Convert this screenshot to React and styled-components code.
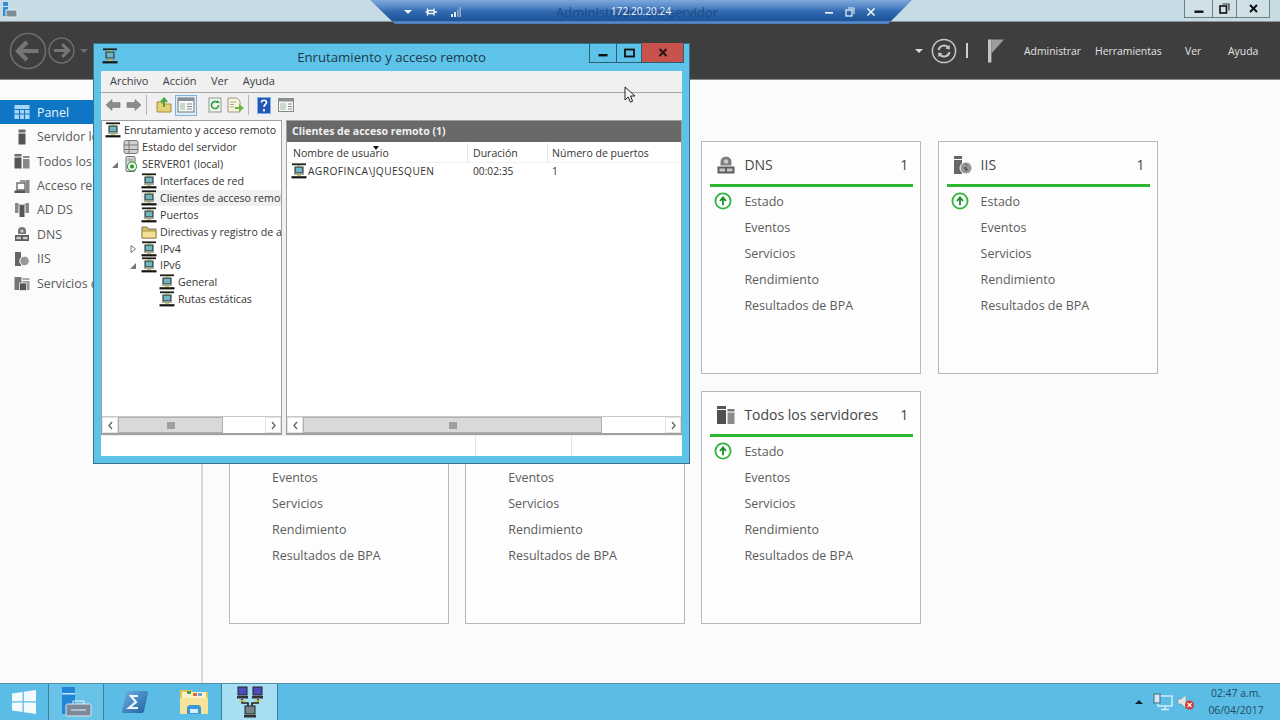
import React from "react";
import styled, { createGlobalStyle } from "styled-components";

const Global = createGlobalStyle`
  html, body { margin: 0; padding: 0; width: 1280px; height: 720px; overflow: hidden; background: #fbfbfc; }
  * { box-sizing: border-box; }
  #root { width: 1280px; height: 720px; }
`;
const FONT = `"Open Sans", "Noto Sans", "Liberation Sans", sans-serif`;

const Page = styled.div`
  position: relative; width: 1280px; height: 720px; display: flex; flex-direction: column;
  overflow: hidden; font-family: ${FONT}; color: #4a4a4a; background: #fbfbfc;
`;
const TitleBar = styled.div`
  height: 22px; flex: none; background: #c6dbe3; display: flex; align-items: flex-start;
  justify-content: space-between; padding: 2px 10px 0 2px; border-bottom: 1px solid #8b9598;
`;
const CaptionButtons = styled.div`
  display: flex; height: 18px; margin-top: -2px; border: 1px solid #6c7f88; border-top: 0; background: #cfe0e7;
`;
const CaptionButton = styled.div`
  width: ${p => p.$w}px; display: flex; align-items: center; justify-content: center;
  & + & { border-left: 1px solid #6c7f88; }
`;
const Header = styled.div`
  height: 58px; flex: none; background: #3e3e3e; display: flex; align-items: center;
  padding: 0 21px 0 9px; border-bottom: 1px solid #8a8a8a;
`;
const NavGroup = styled.div` display: flex; align-items: center; gap: 1px; `;
const HeaderRight = styled.div` margin-left: auto; display: flex; align-items: center; `;
const DropTriangle = styled.span`
  display: block; width: 0; height: 0; border-left: 4px solid transparent; border-right: 4px solid transparent;
  border-top: 4px solid ${p => p.$c || "#d8d8d8"}; margin: ${p => p.$m || "0"};
  ${p => p.$up ? "transform: rotate(180deg);" : ""}
`;
const VSep = styled.span` display: block; width: 2px; height: 15px; background: #cfcfcf; margin: 0 19px 0 9px; `;
const MenuLabel = styled.span`
  font-size: 10.4px; color: #e4e4e4; width: ${p => p.$w}px; white-space: nowrap;
`;
const Body = styled.div` flex: 1; display: flex; min-height: 0; `;
const Sidebar = styled.div`
  width: 203px; flex: none; border-right: 2px solid #d9d9d9; padding-top: 20px; background: #fbfbfc;
`;
const SideItem = styled.div`
  height: 24.45px; display: flex; align-items: center; gap: 7px; padding-left: 14px; font-size: 12.4px; white-space: nowrap;
  color: ${p => p.$active ? "#e9f4fc" : "#5a5a5a"}; background: ${p => p.$active ? "#0f76c5" : "transparent"};
`;
const SideIcon = styled.span` width: 16px; height: 16px; display: flex; flex: none; `;
const Content = styled.div`
  flex: 1; display: grid; grid-template-columns: repeat(4, 220px); grid-auto-rows: 233px; column-gap: 16.2px; row-gap: 17px;
  padding: 61px 0 0 26px; align-content: start;
`;
const Card = styled.div`
  border: 1px solid #b9b9b9; background: #fdfdfd; padding: 0 7px 0 8px;
`;
const CardHead = styled.div`
  height: 45px; border-bottom: 3px solid #2eb52e; display: flex; align-items: center; padding: 3px 5px 0 6px; gap: 8px;
  font-size: 14px; color: #454545; white-space: nowrap;
`;
const CardIcon = styled.span` width: 20px; height: 20px; flex: none; display: flex; `;
const CardCount = styled.span` margin-left: auto; `;
const CardList = styled.div` padding-top: 1.3px; `;
const CardRow = styled.div`
  height: 26.15px; display: flex; align-items: center; padding-left: 34px; position: relative; font-size: 12.5px; color: #5c5c5c; white-space: nowrap;
`;
const StatusBadge = styled.span` position: absolute; left: 4px; top: 4px; display: flex; `;
const Taskbar = styled.div`
  height: 37px; flex: none; background: #5bbde5; display: flex; align-items: stretch; border-top: 1px solid #4d91ad;
`;
const TaskButton = styled.div`
  width: ${p => p.$w}px; flex: none; display: flex; align-items: center; justify-content: center;
  background: ${p => p.$active ? "#a8def3" : p.$soft ? "#69c3e8" : "transparent"};
  border-right: ${p => p.$line ? "1px solid #3f7f9b" : "0"};
`;
const Tray = styled.div` margin-left: auto; display: flex; align-items: center; padding-right: 16px; `;
const TrayIcon = styled.span` display: flex; margin-right: ${p => p.$m}px; `;
const Clock = styled.div`
  font-size: 10.4px; line-height: 17px; text-align: center; color: #1f4a60; width: 56px; margin-top: -1px;
`;

const Window = styled.div`
  position: absolute; left: 93px; top: 43px; width: 597px; height: 421px; background: #5ec3e9;
  box-shadow: inset 0 0 0 1px rgba(40,80,100,.7); display: flex; flex-direction: column; padding: 0 8px 8px;
`;
const WinTitle = styled.div`
  height: 28px; flex: none; display: flex; align-items: center; position: relative; justify-content: center;
  font-size: 13.2px; color: #1d3a48; padding-bottom: 1px;
`;
const WinIcon = styled.span` position: absolute; left: 1px; top: 5px; display: flex; `;
const WinButtons = styled.div`
  position: absolute; right: -2px; top: 0; height: 20px; display: flex; border: 1px solid #2f5f74; border-top: 0;
`;
const WinButton = styled.div`
  width: ${p => p.$w}px; display: flex; align-items: center; justify-content: center;
  background: ${p => p.$close ? "#c8534d" : "transparent"};
  & + & { border-left: 1px solid #2f5f74; }
`;
const WinMenu = styled.div`
  height: 22px; flex: none; background: #f0f0f1; display: flex; align-items: center; gap: 14.5px; padding: 0 0 2px 9px;
  font-size: 11px; color: #3c3c3c; border-bottom: 1px solid #a6a6a6;
`;
const WinToolbar = styled.div`
  height: 27px; flex: none; background: #f0f0f1; display: flex; align-items: center; padding: 0 0 3px 0;
`;
const ToolIcon = styled.span`
  width: ${p => p.$w}px; height: 21px; flex: none; display: flex; align-items: center; justify-content: center;
  ${p => p.$on ? "background:#dcecf9;outline:1px solid #7db2de;outline-offset:-1px;" : ""}
`;
const ToolSep = styled.span` width: 1px; height: 20px; background: #b5b5b5; margin: 0 6px 0 2px; flex: none; `;
const Panes = styled.div`
  flex: 1; min-height: 0; display: flex; gap: 4px; background: #f0f0f0;
`;
const Pane = styled.div`
  width: ${p => p.$w}; flex: ${p => p.$grow ? 1 : "none"}; min-width: 0; display: flex; flex-direction: column;
  background: #fff; border: 1px solid #a0a0a0; border-bottom: 2px solid #a0a0a0;
`;
const PaneScroll = styled.div` flex: 1; min-height: 0; overflow: hidden; position: relative; `;
const TreeBody = styled(PaneScroll)` padding-top: 1px; `;
const TreeRow = styled.div`
  height: 16.88px; display: flex; align-items: center; font-size: 10.65px; color: #333; white-space: nowrap;
  padding-left: ${p => p.$level * 18 + 3}px; position: relative;
`;
const TreeArrow = styled.svg` position: absolute; left: ${p => p.$level * 18 - 9}px; top: 5px; `;
const TreeLabel = styled.span`
  display: flex; align-items: center; gap: 3px; height: 16.9px; flex: 1; min-width: 0;
  ${p => p.$sel ? "background:#f0f0f0;" : ""}
`;
const ListHead = styled.div`
  height: 21px; flex: none; background: #696969; color: #f0f0f0; font-weight: 700; font-size: 10.55px;
  display: flex; align-items: center; padding: 0 0 1px 5px;
`;
const ColRow = styled.div`
  height: 20px; margin-top: 1px; display: flex; align-items: center; font-size: 10.55px; color: #333; position: relative;
  border-bottom: 1px solid #f2f2f2;
`;
const Col = styled.span`
  width: ${p => p.$w}px; padding-left: ${p => p.$p}px; height: 100%; display: flex; align-items: center; white-space: nowrap; flex: none;
  border-right: 1px solid #e6e6e6;
`;
const Cell = styled.span`
  width: ${p => p.$w}px; padding-left: ${p => p.$p}px; display: flex; align-items: center; gap: 1px; white-space: nowrap; flex: none;
`;
const UserName = styled.span` letter-spacing: .42px; `;
const DataRow = styled.div` height: 16px; display: flex; align-items: center; font-size: 10.2px; color: #333; `;
const SortMark = styled.span`
  position: absolute; left: 86px; top: 3px; width: 0; height: 0; border-left: 3.5px solid transparent; border-right: 3.5px solid transparent; border-top: 4px solid #111;
`;
const HScroll = styled.div` height: 17px; flex: none; display: flex; background: #fff; border-top: 1px solid #c9c9c9; `;
const ScrollBtn = styled.span`
  width: 16px; flex: none; display: flex; align-items: center; justify-content: center; border: 1px solid #e2e2e2;
`;
const ScrollThumb = styled.span`
  width: ${p => p.$w}px; flex: none; background: #d9d9d9; border: 1px solid #b0b0b0; display: flex; align-items: center; justify-content: center;
`;
const ScrollRest = styled.span` flex: 1; `;
const WinStatus = styled.div`
  height: 21px; flex: none; background: #fff; display: flex; border-top: 1px solid #f0f0f0;
`;
const StatusCell = styled.span` width: ${p => p.$w}px; flex: none; border-right: 1px solid #e4e4e4; `;
const RdpBar = styled.div`
  position: absolute; left: 370px; top: 0; width: 542px; height: 24px;
  clip-path: polygon(0 0, 100% 0, 95.6% 100%, 4.6% 100%);
  background: linear-gradient(180deg, #7ea8da 0%, #5b8ccb 25%, #2e68ae 50%, #1d5499 85%, #5f8dc9 92%, #4678b8 100%);
  display: flex; align-items: center; justify-content: center; padding-bottom: 2px;
`;
const RdpLeft = styled.div` position: absolute; left: 34px; top: 4px; height: 15px; display: flex; align-items: center; gap: 13px; `;
const RdpRight = styled.div` position: absolute; right: 36px; top: 4px; height: 15px; display: flex; align-items: center; gap: 11px; `;
const RdpBack = styled.span` position: absolute; left: 186px; top: 3px; font-size: 13px; color: #1d4a84; white-space: nowrap; `;
const RdpAddr = styled.span` position: relative; font-size: 10.2px; color: #eef4fb; `;
const Cursor = styled.svg` position: absolute; left: 624px; top: 86px; `;

const Rras = ({ s = 16 }) => (
  <svg width={s} height={s} viewBox="0 0 16 16" style={{ flex: "none" }}>
    <rect x="1" y="0.4" width="14" height="1.8" fill="#1e1e1e" />
    <rect x="6" y="2.2" width="4" height="1.3" fill="#a8bf4f" />
    <rect x="3.4" y="3.5" width="9.2" height="7" fill="#3f4a4a" />
    <rect x="4.8" y="4.7" width="6.4" height="4.6" fill="#6eb7c4" />
    <rect x="3" y="10.5" width="10" height="1.3" fill="#8f8f8f" />
    <rect x="6" y="11.8" width="4" height="1.4" fill="#c2c94d" />
    <rect x="0.5" y="13.2" width="15" height="2.2" fill="#141414" />
  </svg>
);
const Chev = ({ d = "l" }) => (
  <svg width="7" height="9" viewBox="0 0 7 9"><path d={d === "l" ? "M5 1 2 4.5 5 8" : "M2 1 5 4.5 2 8"} fill="none" stroke="#666" strokeWidth="1.4" /></svg>
);
const Grip = () => (
  <svg width="8" height="7" viewBox="0 0 8 7"><path d="M1 0v7M3 0v7M5 0v7M7 0v7" stroke="#666" strokeWidth="1" /></svg>
);
const ScrollBar = ({ thumb }) => (
  <HScroll>
    <ScrollBtn><Chev /></ScrollBtn>
    <ScrollThumb $w={thumb}><Grip /></ScrollThumb>
    <ScrollRest />
    <ScrollBtn><Chev d="r" /></ScrollBtn>
  </HScroll>
);
const StateUp = () => (
  <svg width="18" height="18" viewBox="0 0 18 18">
    <circle cx="9" cy="9" r="7.6" fill="#fff" stroke="#2fb53a" strokeWidth="1.8" />
    <path d="M9 13.2V6.6M6 9 9 5.4 12 9" fill="none" stroke="#159027" strokeWidth="1.8" />
  </svg>
);
const DnsIcon = () => (
  <svg width="20" height="20" viewBox="0 0 20 20">
    <path d="M4.5 10.5V7a5.5 5.5 0 0 1 11 0v3.5z" fill="#7d7d7d" /><circle cx="10" cy="6.5" r="2.3" fill="#c9c9c9" />
    <rect x="1.5" y="11.5" width="17" height="7" fill="#5d5d5d" /><rect x="3.5" y="13.5" width="5.5" height="3" fill="#c9c9c9" /><rect x="11" y="13.5" width="5.5" height="3" fill="#c9c9c9" />
  </svg>
);
const IisIcon = () => (
  <svg width="20" height="20" viewBox="0 0 20 20">
    <rect x="1" y="1" width="8" height="3" fill="#666" /><rect x="1" y="5" width="8" height="14" fill="#666" />
    <circle cx="13" cy="13" r="6" fill="#999" stroke="#f5f5f5" /><path d="M10 12h4l1 3-2 2zM12 8l3 2-2 1z" fill="#666" />
  </svg>
);
const AllIcon = () => (
  <svg width="20" height="20" viewBox="0 0 20 20">
    <rect x="1" y="1" width="9" height="3" fill="#555" /><rect x="1" y="5" width="9" height="14" fill="#4f4f4f" />
    <rect x="11.5" y="4" width="7" height="2.5" fill="#777" /><rect x="11.5" y="7.5" width="7" height="11.5" fill="#8b8b8b" />
  </svg>
);
const SmallGlyph = ({ kind }) => {
  const c = "#6b6b6b";
  if (kind === "panel") return (
    <svg width="16" height="16" viewBox="0 0 16 16"><rect x="0.5" y="1" width="15" height="14" fill="#a8d5f3" /><path d="M0.5 5.5h15M0.5 10h15M5.5 5v10M10.5 5v10" stroke="#0f76c5" strokeWidth="1.1" /></svg>
  );
  if (kind === "one") return <svg width="16" height="16" viewBox="0 0 16 16"><rect x="4.5" y="0.5" width="7" height="3" fill={c} /><rect x="4.5" y="4.5" width="7" height="11" fill="#555" /></svg>;
  if (kind === "all") return <svg width="16" height="16" viewBox="0 0 16 16"><rect x="0.5" y="1" width="7" height="2.5" fill={c} /><rect x="0.5" y="4.5" width="7" height="11" fill="#555" /><rect x="9" y="3" width="6.5" height="2" fill="#888" /><rect x="9" y="6" width="6.5" height="9.5" fill="#888" /></svg>;
  if (kind === "ra") return <svg width="16" height="16" viewBox="0 0 16 16"><path d="M3 5h8v7H3z" fill="none" stroke={c} strokeWidth="1.4" /><rect x="0.5" y="12.5" width="11" height="2.5" fill="#555" /><rect x="11.5" y="2" width="4" height="13" fill="#888" /><rect x="6" y="2" width="5" height="2" fill="#999" /></svg>;
  if (kind === "ad") return <svg width="16" height="16" viewBox="0 0 16 16"><rect x="1" y="1" width="3.5" height="10" fill="#888" /><rect x="11.5" y="1" width="3.5" height="10" fill="#888" /><rect x="5.5" y="3" width="5" height="12" fill="#555" /><rect x="1" y="2.5" width="14" height="1" fill="#888" /></svg>;
  if (kind === "dns") return <svg width="16" height="16" viewBox="0 0 16 16"><path d="M4 8V5a4 4 0 0 1 8 0v3z" fill="#777" /><circle cx="8" cy="5" r="1.6" fill="#ccc" /><rect x="1" y="9" width="14" height="6" fill="#5d5d5d" /><rect x="2.5" y="10.8" width="4.5" height="2.4" fill="#ccc" /><rect x="9" y="10.8" width="4.5" height="2.4" fill="#ccc" /></svg>;
  if (kind === "iis") return <svg width="16" height="16" viewBox="0 0 16 16"><rect x="1" y="1" width="6" height="14" fill="#666" /><circle cx="10.5" cy="10" r="4.8" fill="#999" stroke="#fbfbfc" /></svg>;
  return <svg width="16" height="16" viewBox="0 0 16 16"><rect x="0.5" y="2" width="7" height="13" fill="#777" /><rect x="8.5" y="3" width="7" height="2" fill="#aaa" /><rect x="8.5" y="6" width="7" height="9" fill="#999" /><rect x="5.5" y="8" width="7" height="7.5" fill="#555" stroke="#fbfbfc" strokeWidth=".7" /></svg>;
};

const sideItems = [
  ["panel", "Panel"], ["one", "Servidor local"], ["all", "Todos los servidores"], ["ra", "Acceso remoto"],
  ["ad", "AD DS"], ["dns", "DNS"], ["iis", "IIS"], ["files", "Servicios de archivos y de almacenamiento"],
];
const cards = [
  ["Acceso remoto", <DnsIcon />], ["AD DS", <DnsIcon />], ["DNS", <DnsIcon />], ["IIS", <IisIcon />],
  ["Servicios de archivos", <IisIcon />], ["Servidor local", <AllIcon />], ["Todos los servidores", <AllIcon />],
];
const rows = ["Estado", "Eventos", "Servicios", "Rendimiento", "Resultados de BPA"];

const ServerDb = () => (
  <svg width="16" height="16" viewBox="0 0 16 16" style={{ flex: "none" }}>
    <rect x="1" y="1.5" width="14" height="13" rx="2" fill="#d2d2d2" stroke="#777" />
    <path d="M6 1.5v13M1 6h14M1 10.5h14" stroke="#777" />
  </svg>
);
const ServerLocal = () => (
  <svg width="16" height="16" viewBox="0 0 16 16" style={{ flex: "none" }}>
    <rect x="3" y="0.5" width="9" height="15" rx="1" fill="#dfe3e6" stroke="#6d6d6d" />
    <path d="M4.5 3h6M4.5 5h6" stroke="#8c8c8c" />
    <circle cx="9" cy="10.5" r="4.6" fill="#e9f7e6" stroke="#2e8c2e" /><circle cx="9" cy="10.5" r="2" fill="#1f9a2e" />
  </svg>
);
const Folder = () => (
  <svg width="16" height="16" viewBox="0 0 16 16" style={{ flex: "none" }}>
    <path d="M1 3h5l1 2h8v9H1z" fill="#d9c06a" stroke="#7d7350" /><path d="M1 7h14v7H1z" fill="#f4e094" stroke="#a4914f" />
  </svg>
);

const tree = [
  { l: 0, t: "Enrutamiento y acceso remoto", i: <Rras /> },
  { l: 1, t: "Estado del servidor", i: <ServerDb /> },
  { l: 1, t: "SERVER01 (local)", i: <ServerLocal />, a: "open" },
  { l: 2, t: "Interfaces de red", i: <Rras /> },
  { l: 2, t: "Clientes de acceso remoto", i: <Rras />, sel: true },
  { l: 2, t: "Puertos", i: <Rras /> },
  { l: 2, t: "Directivas y registro de acceso", i: <Folder /> },
  { l: 2, t: "IPv4", i: <Rras />, a: "closed" },
  { l: 2, t: "IPv6", i: <Rras />, a: "open" },
  { l: 3, t: "General", i: <Rras /> },
  { l: 3, t: "Rutas estáticas", i: <Rras /> },
];

const NavCircle = ({ r, sw, right }) => {
  const s = r * 2 + 2;
  return (
    <svg width={s} height={s} viewBox="0 0 36 36" style={right ? { transform: "scaleX(-1)" } : undefined}>
      <circle cx="18" cy="18" r="16.6" fill="none" stroke="#6e6e6e" strokeWidth={sw} />
      <path d="M28 18H9M17 9.5 8.5 18l8.5 8.5" fill="none" stroke="#767676" strokeWidth="4" />
    </svg>
  );
};

const ToolArrow = ({ flip }) => (
  <svg width="16" height="14" viewBox="0 0 16 14" style={flip ? { transform: "scaleX(-1)" } : undefined}>
    <path d="M1 7 7 1.5V4.5H15V9.5H7V12.5Z" fill="#8a8a8a" stroke="#777" strokeWidth=".6" />
  </svg>
);

export default function App() {
  return (
    <Page>
      <Global />
      <TitleBar>
        <svg width="16" height="16" viewBox="0 0 16 16">
          <rect x="1" y="0" width="5" height="14" fill="#2f8fd6" /><rect x="1" y="4" width="5" height="1" fill="#d4eaf8" /><rect x="4" y="8" width="11" height="7" fill="#7c8b96" stroke="#e6eef3" />
        </svg>
        <CaptionButtons>
          <CaptionButton $w={27}><svg width="10" height="10" viewBox="0 0 10 10"><rect x="0.5" y="6.5" width="9" height="2.4" fill="#111" /></svg></CaptionButton>
          <CaptionButton $w={24}><svg width="11" height="11" viewBox="0 0 11 11"><rect x="1" y="3" width="6.5" height="7" fill="none" stroke="#111" strokeWidth="1.6" /><path d="M3.5 1h6.5v6.5" fill="none" stroke="#333" strokeWidth="1.2" /></svg></CaptionButton>
          <CaptionButton $w={33}><svg width="9" height="9" viewBox="0 0 9 9"><path d="M1 1 8 8M8 1 1 8" stroke="#111" strokeWidth="2" /></svg></CaptionButton>
        </CaptionButtons>
      </TitleBar>

      <Header>
        <NavGroup>
          <NavCircle r={18} sw={1.5} />
          <NavCircle r={12.5} sw={2} right />
          <DropTriangle $c="#6e6e6e" $m="0 0 0 4px" />
        </NavGroup>
        <HeaderRight>
          <DropTriangle $m="0 8px 0 0" />
          <svg width="26" height="26" viewBox="0 0 26 26">
            <circle cx="13" cy="13" r="11.6" fill="none" stroke="#c8c8c8" strokeWidth="1.5" />
            <path d="M7.5 12a5.6 5.6 0 0 1 10-2.2M18.5 14a5.6 5.6 0 0 1-10 2.2" fill="none" stroke="#c8c8c8" strokeWidth="2" />
            <path d="m18.6 6.8.2 4.6-4.4-.8zM7.4 19.2l-.2-4.6 4.4.8z" fill="#c8c8c8" />
          </svg>
          <VSep />
          <svg width="18" height="24" viewBox="0 0 18 24" style={{ marginRight: 19 }}>
            <rect x="1" y="0.5" width="3.4" height="23" fill="#c4c4c4" /><path d="M4.4 .5H17L4.4 14.5z" fill="#9c9c9c" />
          </svg>
          <MenuLabel $w={71}>Administrar</MenuLabel>
          <MenuLabel $w={90}>Herramientas</MenuLabel>
          <MenuLabel $w={43}>Ver</MenuLabel>
          <MenuLabel $w={31}>Ayuda</MenuLabel>
        </HeaderRight>
      </Header>

      <Body>
        <Sidebar>
          {sideItems.map(([k, t], i) => (
            <SideItem key={t} $active={i === 0}><SideIcon><SmallGlyph kind={k} /></SideIcon>{t}</SideItem>
          ))}
        </Sidebar>
        <Content>
          {cards.map(([t, icon]) => (
            <Card key={t}>
              <CardHead><CardIcon>{icon}</CardIcon>{t}<CardCount>1</CardCount></CardHead>
              <CardList>
                {rows.map((r, i) => (
                  <CardRow key={r}>{i === 0 && <StatusBadge><StateUp /></StatusBadge>}{r}</CardRow>
                ))}
              </CardList>
            </Card>
          ))}
        </Content>
      </Body>

      <Taskbar>
        <TaskButton $w={49} $line>
          <svg width="26" height="26" viewBox="0 0 26 26"><path d="M1 4.5 11.5 3v9.3H1zM12.8 2.8 25 1v11.3H12.8zM1 13.6h10.5V23L1 21.5zM12.8 13.6H25V25l-12.2-1.8z" fill="#fff" fillOpacity=".92" /></svg>
        </TaskButton>
        <TaskButton $w={55} $soft $line>
          <svg width="32" height="30" viewBox="0 0 32 30"><rect x="2" y="0" width="13" height="27" fill="#1f86d8" /><rect x="2" y="6" width="13" height="1.5" fill="#cfe8f8" /><rect x="6" y="17" width="25" height="12" rx="1.5" fill="#7b8a9a" stroke="#dfe8ee" /><path d="M13 17v-3h11v3M11 23h15" fill="none" stroke="#eef3f6" /></svg>
        </TaskButton>
        <TaskButton $w={62}>
          <svg width="28" height="24" viewBox="0 0 28 24">
            <defs><linearGradient id="psGrad" x1="0" y1="0" x2="1" y2="1"><stop offset="0" stopColor="#6fb2e4" /><stop offset="1" stopColor="#1d5f9f" /></linearGradient></defs>
            <path d="M7 1h19q1.500 0 1 2l-4 18q-.5 2-2 2H2q-1.500 0-1-2L5 3q.5-2 2-2z" fill="url(#psGrad)" />
            <path d="M17 6H10l5 6-7 6h9" fill="none" stroke="#eef6fc" strokeWidth="2.2" />
          </svg>
        </TaskButton>
        <TaskButton $w={56} $line>
          <svg width="30" height="28" viewBox="0 0 30 28"><path d="M1 2h11l2 2h15v21H1z" fill="#e3c25a" /><rect x="3" y="4" width="24" height="8" fill="#fbf2cd" /><path d="M8 3h4v3H8z" fill="#4aa84a" /><path d="M14 5h4v3h-4z" fill="#d96a45" /><path d="M19 5h4v3h-4z" fill="#6aa9de" /><rect x="1" y="10" width="28" height="16" fill="#f7e29a" /><path d="M8 26v-7l2-2h10l2 2v7z" fill="#3c97d6" /><rect x="11" y="21" width="8" height="4" fill="#dcefff" /></svg>
        </TaskButton>
        <TaskButton $w={56} $active $line>
          <svg width="32" height="32" viewBox="0 0 32 32">
            <rect x="4" y="1" width="9" height="8" fill="#4d4db5" stroke="#222" /><rect x="19" y="1" width="9" height="8" fill="#4d4db5" stroke="#222" />
            <rect x="3" y="10" width="11" height="2.5" fill="#333" /><rect x="18" y="10" width="11" height="2.5" fill="#333" />
            <path d="M8 13v4h6v3M24 13v4h-6v3" fill="none" stroke="#222" strokeWidth="1.6" /><path d="M5 15h6M21 15h6" stroke="#c2c94d" strokeWidth="1.6" />
            <rect x="11" y="20" width="10" height="8" fill="#77858a" stroke="#222" /><rect x="10" y="29" width="12" height="2.5" fill="#333" />
          </svg>
        </TaskButton>
        <Tray>
          <TrayIcon $m={10}><DropTriangle $up $c="#123" /></TrayIcon>
          <TrayIcon $m={4}>
            <svg width="20" height="18" viewBox="0 0 20 18"><rect x="5" y="3" width="14" height="10" fill="none" stroke="#d9f0f9" strokeWidth="1.4" /><rect x="1" y="1" width="6" height="9" fill="#d7e7ee" stroke="#3e6d80" /><path d="M12 13v3M8 16.500h8" stroke="#d9f0f9" strokeWidth="1.4" /></svg>
          </TrayIcon>
          <TrayIcon $m={13}>
            <svg width="18" height="18" viewBox="0 0 18 18"><path d="M1 6h3l5-4v13l-5-4H1z" fill="#dfe6ea" stroke="#7b8a90" strokeWidth=".6" /><circle cx="12.5" cy="12" r="4.5" fill="#cf3b33" /><path d="m10.500 10 4 4M14.500 10l-4 4" stroke="#fff" strokeWidth="1.2" /></svg>
          </TrayIcon>
          <Clock>02:47 a.m.<br />06/04/2017</Clock>
        </Tray>
      </Taskbar>

      <Window>
        <WinTitle>
          <WinIcon><Rras /></WinIcon>
          Enrutamiento y acceso remoto
          <WinButtons>
            <WinButton $w={26}><svg width="10" height="10" viewBox="0 0 10 10"><rect x="0.5" y="6" width="9" height="2.4" fill="#111" /></svg></WinButton>
            <WinButton $w={25}><svg width="11" height="10" viewBox="0 0 11 10"><rect x="1" y="1.500" width="9" height="7" fill="none" stroke="#111" strokeWidth="1.8" /></svg></WinButton>
            <WinButton $w={42} $close><svg width="10" height="9" viewBox="0 0 10 9"><path d="M1.500 1 8.500 8M8.500 1 1.500 8" stroke="#2a1512" strokeWidth="2.1" /></svg></WinButton>
          </WinButtons>
        </WinTitle>
        <WinMenu><span>Archivo</span><span>Acción</span><span>Ver</span><span>Ayuda</span></WinMenu>
        <WinToolbar>
          <ToolIcon $w={23}><ToolArrow /></ToolIcon>
          <ToolIcon $w={20}><ToolArrow flip /></ToolIcon>
          <ToolSep />
          <ToolIcon $w={21.5}><svg width="16" height="16" viewBox="0 0 16 16"><path d="M1 5h5l1 2h8v8H1z" fill="#e8cf71" stroke="#a28f47" /><path d="M8 10V3M5 5l3-3.400L11 5" fill="none" stroke="#4aa63c" strokeWidth="2" /></svg></ToolIcon>
          <ToolIcon $w={22} $on><svg width="18" height="16" viewBox="0 0 18 16"><rect x="1" y="1" width="16" height="14" fill="#f4f7f9" stroke="#777" /><rect x="1" y="1" width="16" height="3" fill="#8a8f94" /><rect x="3" y="6" width="5" height="7" fill="#c7dbc9" /><path d="M10 7h5M10 9.500h5M10 12h5" stroke="#8a8a8a" /></svg></ToolIcon>
          <ToolIcon $w={7.5} />
          <ToolIcon $w={21.5}><svg width="14" height="16" viewBox="0 0 14 16"><rect x="1" y="1" width="12" height="14" fill="#eef5ef" stroke="#8b9a8e" /><path d="M10.500 8a3.500 3.500 0 1 1-1.200-2.600" fill="none" stroke="#2e9a3e" strokeWidth="1.6" /><path d="M9 3v3h3z" fill="#2e9a3e" /></svg></ToolIcon>
          <ToolIcon $w={20}><svg width="17" height="16" viewBox="0 0 17 16"><path d="M1 1h9l3 3v11H1z" fill="#f7f3dd" stroke="#9a9a86" /><path d="M3 5h6M3 7.500h4M3 10h4" stroke="#b0ab8a" /><path d="M8 10h4V7l5 4-5 4v-3H8z" fill="#69b544" /></svg></ToolIcon>
          <ToolSep />
          <ToolIcon $w={19}><svg width="14" height="17" viewBox="0 0 14 17"><rect x="0.500" y="0.500" width="13" height="16" fill="#2357b5" stroke="#7db0e8" /><path d="M4.500 5.500c0-3 5-3 5 0 0 2-2.500 2-2.500 4.500M7 12v2.400" fill="none" stroke="#fff" strokeWidth="1.7" /></svg></ToolIcon>
          <ToolIcon $w={24}><svg width="16" height="14" viewBox="0 0 16 14"><rect x="0.500" y="0.500" width="15" height="13" fill="#f4f7f9" stroke="#888" /><rect x="0.500" y="0.500" width="15" height="3" fill="#8a8f94" /><rect x="2" y="5" width="6" height="7" fill="#c7dbc9" /><path d="M10 6h4M10 8.500h4M10 11h4" stroke="#8a8a8a" /></svg></ToolIcon>
        </WinToolbar>
        <Panes>
          <Pane $w="181px">
            <TreeBody>
              {tree.map(n => (
                <TreeRow key={n.t} $level={n.l}>
                  {n.a && (
                    <TreeArrow $level={n.l} width="8" height="8" viewBox="0 0 8 8">
                      {n.a === "open"
                        ? <path d="M7 1v6H1z" fill="#777" />
                        : <path d="M2 .5 6.500 4 2 7.500z" fill="#fff" stroke="#777" />}
                    </TreeArrow>
                  )}
                  <TreeLabel $sel={n.sel}>{n.i}{n.t}</TreeLabel>
                </TreeRow>
              ))}
            </TreeBody>
            <ScrollBar thumb={105} />
          </Pane>
          <Pane $grow>
            <PaneScroll>
              <ListHead>Clientes de acceso remoto (1)</ListHead>
              <ColRow>
                <Col $w={181} $p={6}>Nombre de usuario</Col>
                <Col $w={80} $p={5}>Duración</Col>
                <Col $w={134} $p={4}>Número de puertos</Col>
                <SortMark />
              </ColRow>
              <DataRow>
                <Cell $w={181} $p={4}><Rras /><UserName>AGROFINCA\JQUESQUEN</UserName></Cell>
                <Cell $w={80} $p={5}>00:02:35</Cell>
                <Cell $w={134} $p={4}>1</Cell>
              </DataRow>
            </PaneScroll>
            <ScrollBar thumb={299} />
          </Pane>
        </Panes>
        <WinStatus><StatusCell $w={375} /><StatusCell $w={96} /></WinStatus>
      </Window>

      <RdpBar>
        <RdpBack>Administrador del servidor</RdpBack>
        <RdpLeft>
          <DropTriangle $c="#f2f6fb" />
          <svg width="12" height="10" viewBox="0 0 12 10"><path d="M0.500 5h3M2.500 1.500v7M9 1.500v7M3 3.500h6v3H3zM9 5h3" stroke="#f2f6fb" strokeWidth="1.4" fill="none" /></svg>
          <svg width="11" height="11" viewBox="0 0 11 11"><path d="M1 8h2v3H1zM4 6h2v5H4z" fill="#dfe8f2" /><path d="M7 3.500h1.600V11H7zM9.400 1h1.600v10H9.400z" fill="#8fabc9" /></svg>
        </RdpLeft>
        <RdpAddr>172.20.20.24</RdpAddr>
        <RdpRight>
          <svg width="10" height="10" viewBox="0 0 10 10"><rect x="1" y="5" width="8" height="1.600" fill="#f2f6fb" /></svg>
          <svg width="10" height="10" viewBox="0 0 10 10"><rect x="1" y="3" width="6" height="6" fill="none" stroke="#f2f6fb" strokeWidth="1.2" /><path d="M3 1h6v6" fill="none" stroke="#f2f6fb" /></svg>
          <svg width="10" height="10" viewBox="0 0 10 10"><path d="M1.500 1.500 8.500 8.500M8.500 1.500 1.500 8.500" stroke="#f2f6fb" strokeWidth="1.6" /></svg>
        </RdpRight>
      </RdpBar>

      <Cursor width="13" height="19" viewBox="0 0 13 19">
        <path d="M1 1v13l3.200-3 2.200 5.200 2.200-1L6.500 10H11z" fill="#f4f4f4" stroke="#222" strokeWidth="1" />
      </Cursor>
    </Page>
  );
}
